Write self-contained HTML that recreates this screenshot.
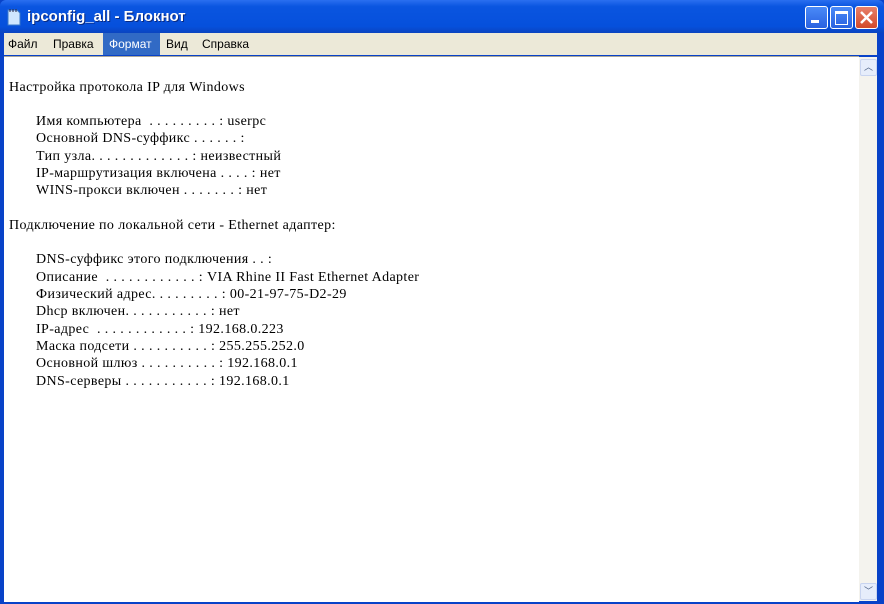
<!DOCTYPE html>
<html><head><meta charset="utf-8"><style>
*{margin:0;padding:0}
body{width:884px;height:604px;overflow:hidden;position:relative;background:#0842c8}
#title{position:absolute;left:0;top:0;width:884px;height:33px;background:linear-gradient(#2a6ff0,#0a55e0 20%,#0650dc 80%,#0a44c0);border-radius:6px 6px 0 0}
#title span{position:absolute;left:27px;top:8px;color:#fff;font:bold 15px "Liberation Sans",sans-serif;text-shadow:1px 1px #0a2a80}
.btn{position:absolute;top:6px;width:21px;height:21px;border:1px solid #fff;border-radius:3px;background:linear-gradient(#4a8af8,#2a62e0)}
#menu{position:absolute;left:4px;top:33px;width:873px;height:22px;background:#ece9d8;font:12px "Liberation Sans",sans-serif}
#menu span{position:absolute;top:4px}
#edit{position:absolute;left:4px;top:56px;width:855px;height:545px;background:#fff;border-top:1px solid #aca899}
#sb{position:absolute;left:859px;top:57px;width:18px;height:544px;background:#f4f3ee}
.ln{position:absolute;font:14px "Liberation Serif","Noto Serif CJK SC",serif;letter-spacing:0.38px;color:#000;white-space:pre;line-height:16px;margin-top:2px}
</style></head><body>
<div id="title">
<svg style="position:absolute;left:6px;top:8px" width="16" height="18"><path d="M2 2h9l3 3v12H2z" fill="#cfe6ff" stroke="#3a78c8"/><path d="M4 1v3M7 1v3M10 1v3" stroke="#224" /></svg>
<span>ipconfig_all - Блокнот</span>
<div class="btn" style="left:805px"><div style="position:absolute;left:5px;top:13px;width:8px;height:3px;background:#fff"></div></div>
<div class="btn" style="left:830px"><div style="position:absolute;left:4px;top:4px;width:11px;height:10px;border:1px solid #fff;border-top-width:3px"></div></div>
<div class="btn" style="left:855px;background:linear-gradient(#e8806a,#d24a2a)"><svg width="21" height="21" style="position:absolute;left:0;top:0"><path d="M5 5L16 16M16 5L5 16" stroke="#fff" stroke-width="2.5"/></svg></div>
</div>
<div id="menu">
<span style="left:4px">Файл</span><span style="left:49px">Правка</span>
<div style="position:absolute;left:99px;top:0;width:57px;height:22px;background:#316ac5"></div>
<span style="left:105px;color:#fff">Формат</span><span style="left:162px">Вид</span><span style="left:198px">Справка</span>
</div>
<div id="edit"></div>
<div id="sb">
<div style="position:absolute;left:1px;top:2px;width:15px;height:15px;border:1px solid #c8d4f0;border-radius:2px;background:#e6edfb;color:#4d6185;font:9px sans-serif;text-align:center;line-height:15px">︿</div>
<div style="position:absolute;left:1px;top:526px;width:15px;height:15px;border:1px solid #c8d4f0;border-radius:2px;background:#e6edfb;color:#4d6185;font:9px sans-serif;text-align:center;line-height:15px">﹀</div>
</div>
<div class="ln" style="left:9px;top:78px">Настройка протокола IP для Windows</div>
<div class="ln" style="left:36px;top:112px">Имя компьютера  . . . . . . . . . : userpc</div>
<div class="ln" style="left:36px;top:129px">Основной DNS-суффикс . . . . . . :</div>
<div class="ln" style="left:36px;top:147px">Тип узла. . . . . . . . . . . . . : неизвестный</div>
<div class="ln" style="left:36px;top:164px">IP-маршрутизация включена . . . . : нет</div>
<div class="ln" style="left:36px;top:181px">WINS-прокси включен . . . . . . . : нет</div>
<div class="ln" style="left:9px;top:216px">Подключение по локальной сети - Ethernet адаптер:</div>
<div class="ln" style="left:36px;top:250px">DNS-суффикс этого подключения . . :</div>
<div class="ln" style="left:36px;top:268px">Описание  . . . . . . . . . . . . : VIA Rhine II Fast Ethernet Adapter</div>
<div class="ln" style="left:36px;top:285px">Физический адрес. . . . . . . . . : 00-21-97-75-D2-29</div>
<div class="ln" style="left:36px;top:302px">Dhcp включен. . . . . . . . . . . : нет</div>
<div class="ln" style="left:36px;top:320px">IP-адрес  . . . . . . . . . . . . : 192.168.0.223</div>
<div class="ln" style="left:36px;top:337px">Маска подсети . . . . . . . . . . : 255.255.252.0</div>
<div class="ln" style="left:36px;top:354px">Основной шлюз . . . . . . . . . . : 192.168.0.1</div>
<div class="ln" style="left:36px;top:372px">DNS-серверы . . . . . . . . . . . : 192.168.0.1</div>
</body></html>
